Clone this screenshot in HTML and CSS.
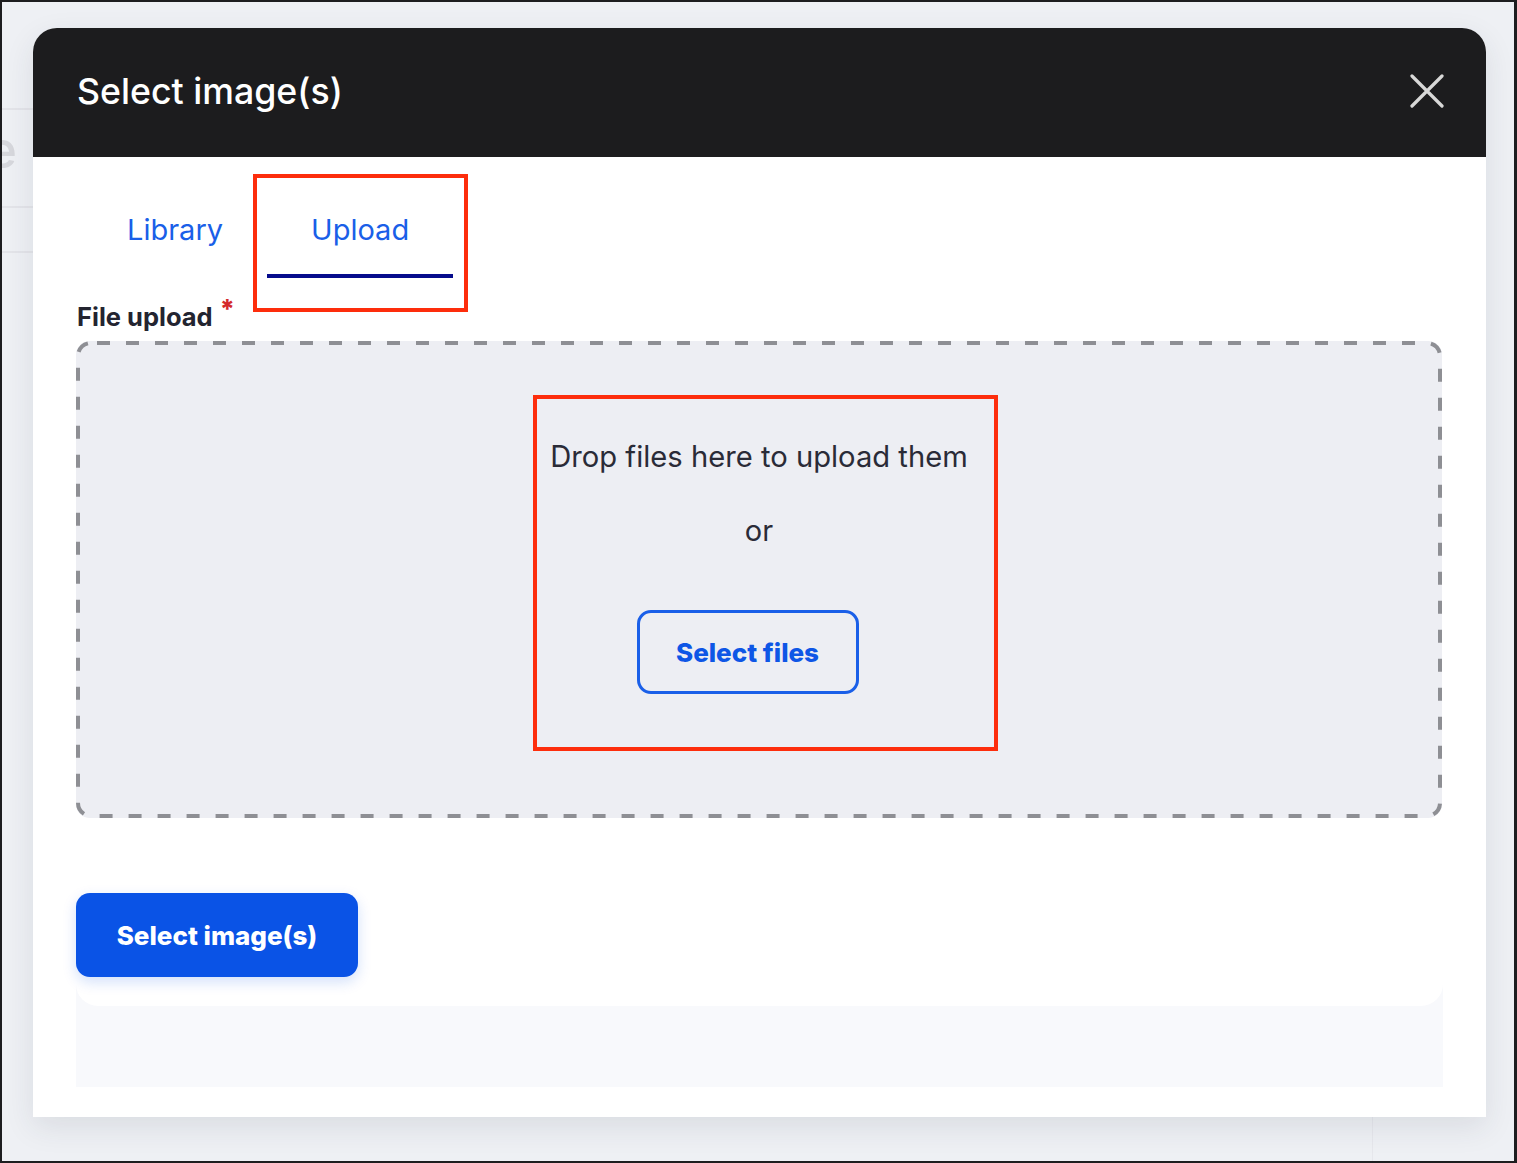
FILE: index.html
```html
<!DOCTYPE html>
<html lang="en">
<head>
<meta charset="utf-8">
<title>Select image(s)</title>
<link rel="stylesheet" href="styles.css">
</head>
<body>
<div class="screen">
  <div class="backdrop">
    <div class="bg-line bg-line-1"></div>
    <div class="bg-title">Title here</div>
    <div class="bg-line bg-line-2"></div>
    <div class="bg-line bg-line-3"></div>
    <div class="bg-vline"></div>
  </div>

  <div class="dialog">
    <div class="dialog-header">
      <h1 class="dialog-title">Select image(s)</h1>
      <button class="close-btn" aria-label="Close">
        <svg width="34" height="34" viewBox="0 0 34 34"><path d="M2 2 L32 32 M32 2 L2 32" stroke="#d8d8d8" stroke-width="3.2" stroke-linecap="round" fill="none"/></svg>
      </button>
    </div>
    <div class="dialog-body">
      <div class="panel">
        <div class="card">
          <div class="tabs">
            <a class="tab">Library</a>
            <a class="tab tab-active">Upload</a>
          </div>
          <div class="field-label">File upload<span class="req">*</span></div>
          <div class="dropzone">
            <svg class="dash-frame" width="1366" height="477" viewBox="0 0 1366 477" preserveAspectRatio="none"><rect x="2" y="2" width="1362" height="473" rx="13" ry="13" fill="none" stroke="#8e8f94" stroke-width="4" stroke-dasharray="13 16" stroke-dashoffset="-6"/></svg>
            <div class="drop-text">Drop files here to upload them</div>
            <div class="drop-or">or</div>
            <button class="btn-outline">Select files</button>
          </div>
          <div class="actions">
            <button class="btn-primary">Select image(s)</button>
          </div>
        </div>
      </div>
    </div>
  </div>

  <div class="annot annot-tab"></div>
  <div class="annot annot-drop"></div>
</div>
</body>
</html>
```

FILE: styles.css
```css
* { box-sizing: border-box; }
html, body { margin: 0; padding: 0; }
body {
  font-family: Inter, "Noto Sans", "Liberation Sans", sans-serif;
  background: #eef0f4;
}
.screen {
  position: relative;
  width: 1517px;
  height: 1163px;
  border: 2px solid #1d1d1f;
  border-right-width: 3px;
  background: #eef0f4;
  padding: 26px 0 0 31px;
  overflow: hidden;
}
.backdrop { position: absolute; inset: 0; pointer-events: none; }
.bg-line { position: absolute; left: 0; width: 40px; height: 2px; background: #e3e4e9; }
.bg-line-1 { top: 106px; }
.bg-line-2 { top: 204px; }
.bg-line-3 { top: 249px; }
.bg-title {
  position: absolute;
  top: 118px;
  right: 1497px;
  font-size: 52px;
  font-weight: 500;
  color: #d6d7dc;
  white-space: nowrap;
  line-height: 60px;
}
.bg-vline { position: absolute; left: 1370px; top: 1115px; width: 1px; height: 50px; background: #e6e7ec; }

.dialog {
  position: relative;
  width: 1453px;
  height: 1089px;
  background: #fff;
  border-radius: 24px 24px 0 0;
  box-shadow: 0 10px 30px rgba(40, 45, 70, 0.10);
  display: flex;
  flex-direction: column;
}
.dialog-header {
  height: 129px;
  flex: none;
  background: #1c1c1e;
  border-radius: 24px 24px 0 0;
  display: flex;
  align-items: center;
  justify-content: space-between;
  padding: 0 42px 4px 44px;
}
.dialog-title {
  margin: 0;
  color: #fff;
  font-size: 35.7px;
  font-weight: 500;
}
.close-btn {
  background: none;
  border: 0;
  padding: 0;
  width: 34px;
  height: 34px;
  display: flex;
  cursor: pointer;
}
.dialog-body {
  flex: 1;
  padding: 30px 43px 30px 43px;
  display: flex;
}
.panel {
  flex: 1;
  background: #f8f9fc;
}
.card {
  background: #fff;
  border-radius: 0 0 22px 22px;
  padding: 0 1px 29px 0;
}
.tabs {
  display: flex;
  padding-left: 7px;
}
.tab {
  display: block;
  padding: 24px 44px 26px;
  font-size: 29px;
  line-height: 37px;
  color: #1a5fe8;
  border-bottom: 4px solid transparent;
}
.tab-active { border-bottom-color: #060c8c; }
.field-label {
  margin-top: 24px;
  font-size: 25.5px;
  line-height: 30px;
  font-weight: 700;
  color: #232430;
  padding-left: 1px;
}
.req {
  color: #d42a2a;
  font-size: 26px;
  font-weight: 800;
  vertical-align: 8px;
  margin-left: 7px;
  line-height: 0;
}
.dropzone {
  position: relative;
  margin-top: 9px;
  height: 477px;
  border-radius: 14px;
  background: #edeef3;
  display: flex;
  flex-direction: column;
  align-items: center;
  padding-top: 96px;
}
.dash-frame {
  position: absolute;
  left: 0;
  top: 0;
  pointer-events: none;
}
.drop-text {
  font-size: 29.2px;
  line-height: 40px;
  color: #2a2b37;
}
.drop-or {
  margin-top: 34px;
  font-size: 29px;
  line-height: 40px;
  color: #2a2b37;
}
.btn-outline {
  margin-top: 59px;
  margin-right: 23px;
  width: 222px;
  height: 84px;
  border: 3px solid #1a5fe8;
  border-radius: 14px;
  background: transparent;
  font-family: inherit;
  font-size: 26px;
  font-weight: 800;
  color: #0e56e6;
}
.actions { margin-top: 75px; }
.btn-primary {
  width: 282px;
  height: 84px;
  border: 0;
  border-radius: 14px;
  background: #0a53e6;
  color: #fff;
  font-family: inherit;
  font-size: 26px;
  font-weight: 800;
  box-shadow: 0 5px 14px rgba(10, 83, 230, 0.18);
}
.annot {
  position: absolute;
  border: 4px solid #fd2d0c;
  pointer-events: none;
}
.annot-tab { left: 251px; top: 172px; width: 215px; height: 138px; }
.annot-drop { left: 531px; top: 393px; width: 465px; height: 356px; }
```
